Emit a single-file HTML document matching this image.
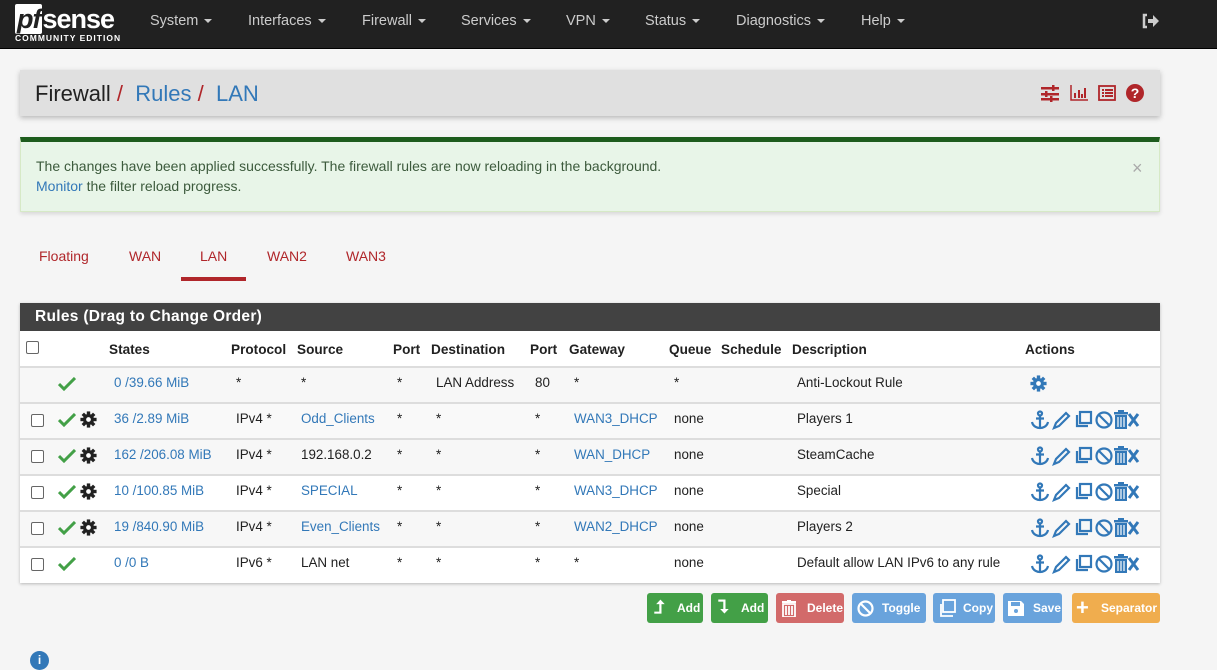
<!DOCTYPE html><html><head><meta charset="utf-8"><style>
*{box-sizing:border-box;margin:0;padding:0}
body{width:1217px;height:667px;overflow:hidden;background:#f5f5f5;font-family:"Liberation Sans",sans-serif;font-size:14px;color:#212121;position:relative}
.a{position:absolute;white-space:nowrap}
.nav{position:absolute;left:0;top:0;width:1217px;height:49px;background:#212121;border-bottom:1px solid #000}
.nav .m{position:absolute;top:13px;color:#ccc;font-size:14.5px}
.car{display:inline-block;width:0;height:0;border-left:4px solid transparent;border-right:4px solid transparent;border-top:4px solid #ccc;vertical-align:middle;margin-left:6px}
.bc{position:absolute;left:20px;top:70px;width:1140px;height:46px;background:#e0e0e0;box-shadow:0 2px 5px rgba(0,0,0,.25)}
.blue{color:#3278b8}
.alert{position:absolute;left:20px;top:137px;width:1140px;height:75px;background:#e8f5e8;border:1px solid #d6e9c6;border-top:5px solid #1d5c1d;box-shadow:0 2px 4px rgba(0,0,0,.12)}
.tab{position:absolute;top:248px;color:#b0262a;font-size:14px}
.panel{position:absolute;left:20px;top:303px;width:1140px;height:280px;background:#fff;box-shadow:0 1px 3px rgba(0,0,0,.25)}
.ph{position:absolute;left:0;top:0;width:1140px;height:28px;background:#424242;color:#fff;font-weight:bold;font-size:15.5px;padding:5px 15px;letter-spacing:.3px}
.row{position:absolute;left:0;width:1140px;height:36px;border-top:2px solid #ddd;font-size:13.4px}
.row span{position:absolute;top:7px;white-space:nowrap}
.cb{position:absolute;left:11px;top:10px;width:13px;height:13px;border:1px solid #666;border-radius:2px;background:#fff}
.btn{position:absolute;top:593px;height:30px;border-radius:3px;color:#fff;font-size:12px;font-weight:bold}
.btn span{position:absolute;top:8px}
</style></head><body>
<div class="nav">
 <div class="a" style="left:15px;top:4px;color:#fff;font-weight:bold;font-size:27px;letter-spacing:-1px;font-style:normal"><span style="background:#fff;color:#212121;font-style:italic;padding:0 2px;border-radius:2px">pf</span>sense</div>
 <div class="a" style="left:15px;top:33px;color:#fff;font-weight:bold;font-size:8.5px;letter-spacing:1px">COMMUNITY EDITION</div>
 <div class="m" style="left:150px">System<span class="car"></span></div>
 <div class="m" style="left:248px">Interfaces<span class="car"></span></div>
 <div class="m" style="left:362px">Firewall<span class="car"></span></div>
 <div class="m" style="left:461px">Services<span class="car"></span></div>
 <div class="m" style="left:566px">VPN<span class="car"></span></div>
 <div class="m" style="left:645px">Status<span class="car"></span></div>
 <div class="m" style="left:736px">Diagnostics<span class="car"></span></div>
 <div class="m" style="left:861px">Help<span class="car"></span></div>
 <svg class="a" style="left:1141px;top:13px" width="19" height="16" viewBox="0 0 19 16"><path d="M6 2H3v12h3" fill="none" stroke="#ccc" stroke-width="2.5"/><path d="M7 6h5V2l6 6-6 6v-4H7z" fill="#ccc"/></svg>
</div>
<div class="bc">
 <div class="a" style="left:15px;top:11px;font-size:22px">Firewall <span style="color:#b0262a">/</span> &nbsp;<span class="blue">Rules</span> <span style="color:#b0262a">/</span> &nbsp;<span class="blue">LAN</span></div>
 <svg class="a" style="left:1021px;top:15px" width="20" height="17" viewBox="0 0 20 17"><g fill="#b0262a"><rect x="0" y="2" width="18" height="2.5"/><rect x="0" y="8" width="18" height="2.5"/><rect x="0" y="13" width="18" height="2.5"/><rect x="11" y="0" width="2.5" height="6"/><rect x="4" y="6" width="2.5" height="6"/><rect x="9" y="11" width="2.5" height="6"/></g></svg>
 <svg class="a" style="left:1050px;top:15px" width="18" height="16" viewBox="0 0 18 16"><path d="M1 0v15h17" fill="none" stroke="#b0262a" stroke-width="1.5"/><g fill="#b0262a"><rect x="4" y="8" width="2" height="5"/><rect x="8" y="5" width="2" height="8"/><rect x="11" y="9" width="2" height="4"/><rect x="14" y="3" width="2" height="10"/></g></svg>
 <svg class="a" style="left:1078px;top:15px" width="18" height="16" viewBox="0 0 18 16"><rect x="1" y="1" width="16" height="14" fill="none" stroke="#b0262a" stroke-width="1.8"/><g fill="#b0262a"><rect x="4" y="4" width="2" height="2"/><rect x="7" y="4" width="8" height="2"/><rect x="4" y="7" width="2" height="2"/><rect x="7" y="7" width="8" height="2"/><rect x="4" y="10" width="2" height="2"/><rect x="7" y="10" width="8" height="2"/></g></svg>
 <svg class="a" style="left:1106px;top:14px" width="18" height="18" viewBox="0 0 18 18"><circle cx="9" cy="9" r="9" fill="#b0262a"/><text x="9" y="14" text-anchor="middle" fill="#fff" font-weight="bold" font-size="14" font-family="Liberation Sans">?</text></svg>
</div>
<div class="alert">
 <div class="a" style="left:15px;top:16px;font-size:14px;color:#3c5a3c">The changes have been applied successfully. The firewall rules are now reloading in the background.</div>
 <div class="a" style="left:15px;top:36px;color:#3c5a3c"><span class="blue">Monitor</span> the filter reload progress.</div>
 <div class="a" style="left:1111px;top:16px;color:#aaa;font-size:18px">×</div>
</div>
<div class="tab" style="left:39px">Floating</div>
<div class="tab" style="left:129px">WAN</div>
<div class="tab" style="left:200px">LAN</div>
<div class="tab" style="left:267px">WAN2</div>
<div class="tab" style="left:346px">WAN3</div>
<div class="a" style="left:181px;top:277px;width:65px;height:4px;background:#b0262a"></div>
<div class="panel">
 <div class="ph">Rules (Drag to Change Order)</div>
 <div class="row" style="top:28px;border-top:0;height:35px;font-weight:bold;font-size:13.6px">
  <div class="cb" style="left:6px;top:10px"></div>
  <span style="left:89px;top:11px">States</span><span style="left:211px;top:11px">Protocol</span><span style="left:277px;top:11px">Source</span><span style="left:373px;top:11px">Port</span><span style="left:411px;top:11px">Destination</span><span style="left:510px;top:11px">Port</span><span style="left:549px;top:11px">Gateway</span><span style="left:649px;top:11px">Queue</span><span style="left:701px;top:11px">Schedule</span><span style="left:772px;top:11px">Description</span><span style="left:1005px;top:11px">Actions</span>
 </div>
 <div id="rows"></div>
</div>
<div class="btn" style="left:647px;width:56px;background:#43a047"><span style="left:7px;top:4px;font-size:18px">⮥</span><span style="left:30px">Add</span></div>
<div class="btn" style="left:711px;width:57px;background:#43a047"><span style="left:7px;top:4px;font-size:18px">⮧</span><span style="left:30px">Add</span></div>
<div class="btn" style="left:776px;width:68px;background:#d26a6a"><svg class="a" style="left:5px;top:7px" width="16" height="17" viewBox="0 0 16 17"><rect x="1" y="1" width="14" height="2" fill="#fff"/><rect x="6" y="0" width="4" height="2" fill="#fff"/><path d="M2 4h12v13H2z M5 6v9 M8 6v9 M11 6v9" fill="none" stroke="#fff" stroke-width="1.8"/></svg><span style="left:31px">Delete</span></div>
<div class="btn" style="left:852px;width:74px;background:#69a3dc"><svg class="a" style="left:5px;top:7px" width="17" height="17"><circle cx="8.5" cy="8.5" r="7" fill="none" stroke="#fff" stroke-width="2.2"/><path d="M4 4l9 9" stroke="#fff" stroke-width="2.2"/></svg><span style="left:30px">Toggle</span></div>
<div class="btn" style="left:933px;width:62px;background:#69a3dc"><svg class="a" style="left:5px;top:6px" width="18" height="18"><rect x="5" y="1" width="12" height="12" fill="none" stroke="#fff" stroke-width="1.8"/><path d="M3 5v12h12" fill="none" stroke="#fff" stroke-width="1.8"/></svg><span style="left:30px">Copy</span></div>
<div class="btn" style="left:1003px;width:59px;background:#69a3dc"><svg class="a" style="left:5px;top:7px" width="16" height="16"><path d="M0 1h13l3 3v12H0z" fill="#fff"/><rect x="3" y="2" width="9" height="4" fill="#69a3dc"/><circle cx="8" cy="11" r="2" fill="#69a3dc"/></svg><span style="left:30px">Save</span></div>
<div class="btn" style="left:1072px;width:88px;background:#f0ad4e"><span style="left:4px;top:2px;font-size:22px">+</span><span style="left:29px">Separator</span></div>
<div class="a" style="left:30px;top:651px;width:19px;height:19px;border-radius:50%;background:#3278b8;color:#fff;font-weight:bold;font-size:12px;text-align:center;line-height:19px">i</div>
<script>
var chk='<svg style="position:absolute;left:38px;top:9px" width="18" height="14" viewBox="0 0 18 14"><path d="M1 7l5 5L17 1" fill="none" stroke="#43a047" stroke-width="3"/></svg>';
var gear=function(x,c){return '<svg style="position:absolute;left:'+x+'px;top:7px" width="17" height="17" viewBox="-10 -10 20 20"><g fill="'+c+'"><circle r="6.5"/>'+[0,45,90,135].map(a=>'<rect x="-2" y="-9.5" width="4" height="19" transform="rotate('+a+')"/>').join('')+'</g><circle r="2.8" fill="#fff"/></svg>'};
var acts='<svg style="position:absolute;left:1010px;top:6px" width="110" height="20" viewBox="0 0 110 20"><g fill="none" stroke="#3278b8" stroke-width="2.2"><circle cx="10" cy="3.5" r="2"/><path d="M10 6v12M6 8.5h8M2 12c1 5 6 6 8 6s7-1 8-6"/><path d="M24 18l2-5 10-10 3 3-10 10z"/><rect x="50" y="2" width="11" height="11"/><path d="M47 5v11h11"/><circle cx="74" cy="10" r="7.5"/><path d="M69 5l10 10"/><path d="M99 4l9 12M108 4l-9 12" stroke-width="3"/></g><g fill="#3278b8"><rect x="84" y="2" width="14" height="2.5"/><rect x="88" y="0" width="6" height="2"/><path d="M85 5h12v14H85z"/></g><g stroke="#fff" stroke-width="1.2"><path d="M88 7v10M91 7v10M94 7v10"/></g></svg>';
var R=[["","0 /39.66 MiB","*","*","*","LAN Address","80","*","*","Anti-Lockout Rule",0],
["36 /2.89 MiB","IPv4 *","Odd_Clients","*","*","*","WAN3_DHCP","none","Players 1",1],
["162 /206.08 MiB","IPv4 *","192.168.0.2","*","*","*","WAN_DHCP","none","SteamCache",1],
["10 /100.85 MiB","IPv4 *","SPECIAL","*","*","*","WAN3_DHCP","none","Special",1],
["19 /840.90 MiB","IPv4 *","Even_Clients","*","*","*","WAN2_DHCP","none","Players 2",1],
["0 /0 B","IPv6 *","LAN net","*","*","*","*","none","Default allow LAN IPv6 to any rule",2]];
var h='';
R.forEach(function(r,i){var top=63+i*36;var bg=i%2==0?'#f7f7f7':'#fff';if(i==1)bg='#f9f9f9';
h+='<div class="row" style="top:'+top+'px;background:'+bg+'">';
if(i==0){h+=chk+'<span class="blue" style="left:94px">0 /39.66 MiB</span><span style="left:216px">*</span><span style="left:281px">*</span><span style="left:377px">*</span><span style="left:416px">LAN Address</span><span style="left:515px">80</span><span style="left:554px">*</span><span style="left:654px">*</span><span style="left:777px">Anti-Lockout Rule</span>'+gear(1010,'#3278b8');}
else{h+='<div class="cb"></div>'+chk+(r[9]==1?gear(60,'#212121'):'')+'<span class="blue" style="left:94px">'+r[0]+'</span><span style="left:216px">'+r[1]+'</span><span style="left:281px" class="'+(r[2][0]<'A'||r[2]=="LAN net"?'':'blue')+'">'+r[2]+'</span><span style="left:377px">*</span><span style="left:416px">*</span><span style="left:515px">*</span><span style="left:554px" class="'+(r[6]=='*'?'':'blue')+'">'+r[6]+'</span><span style="left:654px">none</span><span style="left:777px">'+r[8]+'</span>'+acts;}
h+='</div>';});
document.getElementById('rows').innerHTML=h;
</script>
</body></html>
